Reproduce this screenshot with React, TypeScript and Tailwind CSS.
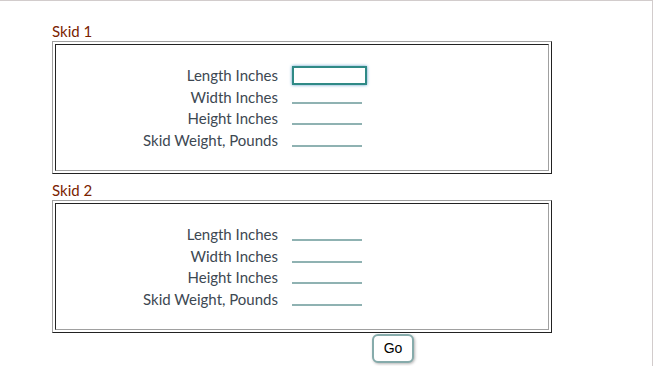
const FIELDS = ["Length Inches", "Width Inches", "Height Inches", "Skid Weight, Pounds"];

function SkidBox({ title, focusFirst }: { title: string; focusFirst?: boolean }) {
  return (
    <div>
      <div className="h-[17px] text-[15px] leading-[15px] text-[#7a2200]">{title}</div>
      <div className="w-[500px] h-[133px] border border-t-[#a0a0a0] border-l-[#a0a0a0] border-b-[#222] border-r-[#222] p-[2px]">
        <div className="h-full border border-t-[#222] border-l-[#222] border-b-[#a0a0a0] border-r-[#a0a0a0] pt-[20px]">
          {FIELDS.map((f, i) => (
            <div key={f} className="flex items-start h-[21.7px]">
              <div className="w-[222px] text-right text-[15px] text-[#3d4852] leading-[21.7px]">{f}</div>
              {focusFirst && i === 0 ? (
                <div className="ml-[14px] mt-[1px] w-[75px] h-[19px] border-2 border-[#2f8a86] shadow-[0_0_3px_#5a9cc8]" />
              ) : (
                <div className="ml-[14px] w-[70px] h-[17px] border-b-2 border-[#8fb2b2]" />
              )}
            </div>
          ))}
        </div>
      </div>
    </div>
  );
}

export default function App() {
  return (
    <div className="w-[653px] h-[366px] bg-white border-t border-r border-[#d2cccc] overflow-hidden" style={{ fontFamily: "Lato, 'Liberation Sans', sans-serif" }}>
      <div className="pl-[52px] pt-[23px] flex flex-col gap-[9px]">
        <SkidBox title="Skid 1" focusFirst />
        <SkidBox title="Skid 2" />
      </div>
      <div className="pl-[372px] pt-[1px]">
        <button className="w-[42px] h-[29px] rounded-[6px] border-2 border-[#86abab] bg-white text-[14px] text-black shadow-[1px_1px_3px_rgba(0,0,0,0.3)]" style={{ fontFamily: "'Liberation Sans', Arial, sans-serif" }}>
          Go
        </button>
      </div>
    </div>
  );
}
